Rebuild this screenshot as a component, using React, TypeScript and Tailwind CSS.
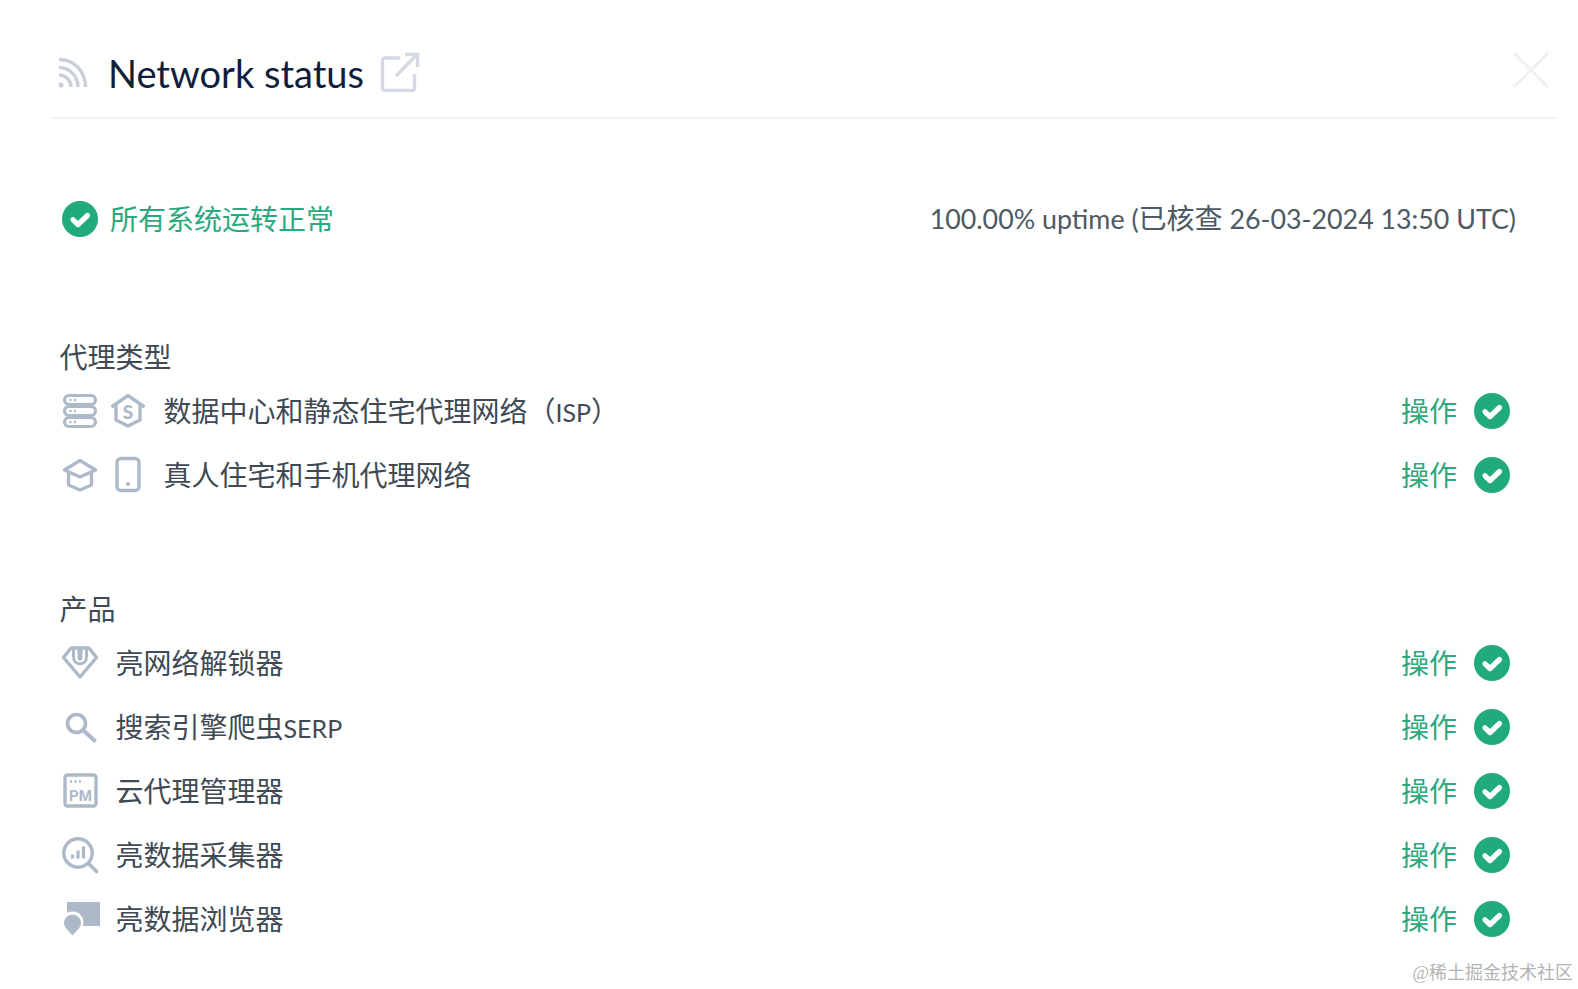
const cjk = "font-['Lato','Noto_Sans_CJK_SC',sans-serif]";

function Check({ className = "" }: { className?: string }) {
  return (
    <svg width="36" height="36" viewBox="0 0 36 36" className={"shrink-0 " + className}>
      <circle cx="18" cy="18" r="18" fill="#21ab7b" />
      <path d="M11 18.8 L16 23.5 L25.5 14.5" fill="none" stroke="#fff" strokeWidth="5.2" strokeLinecap="round" strokeLinejoin="round" />
    </svg>
  );
}

const iconProps = {
  width: 36,
  height: 36,
  viewBox: "0 0 36 36",
  fill: "none",
  stroke: "#adb9c8",
  strokeWidth: 3.4,
  className: "shrink-0 overflow-visible",
};

function ServerIcon() {
  return (
    <svg {...iconProps}>
      {[2.5, 13.5, 24.5].map((y) => (
        <g key={y}>
          <rect x="2.5" y={y} width="31" height="9" rx="4.5" strokeWidth="3.2" />
          <path d={`M7.5 ${y + 4.5} h2 M12 ${y + 4.5} h2`} strokeWidth="2.6" />
        </g>
      ))}
    </svg>
  );
}

function HouseDollarIcon() {
  return (
    <svg {...iconProps}>
      <path d="M1.5 14 L18 2.5 L34.5 14 M6 12 V27 L18 33 L30 27 V12" strokeLinejoin="round" />
      <text x="18" y="25.5" fontSize="19" fontWeight="900" fill="#adb9c8" stroke="none" textAnchor="middle" fontFamily="Lato, sans-serif">
        S
      </text>
    </svg>
  );
}

function HouseIcon() {
  return (
    <svg {...iconProps}>
      <path d="M2.5 13 L18 3.5 L33.5 13 L18 20 Z" strokeLinejoin="round" />
      <path d="M6.5 15.5 V28 L18 33 L29.5 28 V15.5" strokeLinejoin="round" />
    </svg>
  );
}

function PhoneIcon() {
  return (
    <svg {...iconProps}>
      <rect x="7" y="1.5" width="22" height="32" rx="4" />
      <circle cx="18" cy="27" r="2" fill="#adb9c8" stroke="none" />
    </svg>
  );
}

function DiamondIcon() {
  return (
    <svg {...iconProps}>
      <path d="M9 3 H27 L34.5 12.5 L18 32 L1.5 12.5 Z" strokeLinejoin="round" />
      <path d="M11.5 3 V12 C11.5 21 24.5 21 24.5 12 V3 M17 3 V12 C17 15 19 15 19 12 V3" strokeWidth="3" />
    </svg>
  );
}

function SearchIcon() {
  return (
    <svg {...iconProps}>
      <circle cx="14.5" cy="14.5" r="9" strokeWidth="3.6" />
      <path d="M22 22 L32.5 31.5" strokeWidth="4" strokeLinecap="round" />
    </svg>
  );
}

function PmIcon() {
  return (
    <svg {...iconProps}>
      <rect x="3" y="2" width="31" height="31" rx="2.5" />
      <path d="M8 8.5 h2 M12.5 8.5 h2 M17 8.5 h2" strokeWidth="2.4" />
      <text x="18.5" y="28" fontSize="15" fontWeight="700" fill="#adb9c8" stroke="none" textAnchor="middle" fontFamily="Roboto, sans-serif">
        PM
      </text>
    </svg>
  );
}

function AnalyticsIcon() {
  return (
    <svg {...iconProps}>
      <circle cx="16" cy="16" r="14.2" />
      <path d="M26.5 26.5 L34.5 34.5" strokeWidth="3.8" strokeLinecap="round" />
      <path d="M10.5 17.5 V21.5 M16 13.5 V21.5 M21.5 9.5 V21.5" strokeWidth="3.2" />
    </svg>
  );
}

function BrowserIcon() {
  return (
    <svg {...iconProps} stroke="none">
      <rect x="5" y="1" width="33" height="24" fill="#adb9c8" />
      <circle cx="10.5" cy="21.5" r="11" fill="#fff" />
      <path d="M10.5 34.5 L4.5 28 A8.5 8.5 0 1 1 16.5 28 Z" fill="#adb9c8" />
    </svg>
  );
}

type Row = { icons: React.ReactNode[]; label: React.ReactNode; id: string };

const proxyRows: Row[] = [
  {
    id: "isp",
    icons: [<ServerIcon key="a" />, <HouseDollarIcon key="b" />],
    label: (
      <>
        数据中心和静态住宅代理网络（<span className="text-[25px]">ISP</span>）
      </>
    ),
  },
  { id: "residential", icons: [<HouseIcon key="a" />, <PhoneIcon key="b" />], label: "真人住宅和手机代理网络" },
];

const productRows: Row[] = [
  { id: "unlocker", icons: [<DiamondIcon key="a" />], label: "亮网络解锁器" },
  {
    id: "serp",
    icons: [<SearchIcon key="a" />],
    label: (
      <>
        搜索引擎爬虫<span className="text-[25px]">SERP</span>
      </>
    ),
  },
  { id: "pm", icons: [<PmIcon key="a" />], label: "云代理管理器" },
  { id: "collector", icons: [<AnalyticsIcon key="a" />], label: "亮数据采集器" },
  { id: "browser", icons: [<BrowserIcon key="a" />], label: "亮数据浏览器" },
];

function StatusRow({ row }: { row: Row }) {
  return (
    <div className="flex h-[64px] items-center pr-[68px]">
      <div className="flex gap-[12px]">{row.icons}</div>
      <span className="ml-[17.5px] text-[28px] leading-[40px] text-[#3f4a54]">{row.label}</span>
      <span className="ml-auto text-[28px] leading-[40px] text-[#2aa97e]">操作</span>
      <Check className="ml-[17px]" />
    </div>
  );
}

export default function App() {
  return (
    <div className={"relative h-[989px] w-[1578px] overflow-hidden bg-white " + cjk}>
      <header className="ml-[52px] mr-[22px] flex h-[119px] items-center border-b-2 border-[#f3f4f5] pt-[30px]">
        <svg width="32" height="32" viewBox="0 0 32 32" fill="none" stroke="#c9ced8" strokeWidth="3.4" className="ml-[5px] -mt-[2px]">
          <path d="M2 2.5 C17 2.5 28.5 14 28.5 30 M2 10.5 C12.5 10.5 21 19 21 30 M2 18 C8.5 18 14 23.5 14 30" />
          <circle cx="4" cy="28" r="2.5" fill="#c9ced8" stroke="none" />
        </svg>
        <h1 className="ml-[19px] -mt-[2px] text-[38px] font-normal leading-[48px] text-[#0e1e3c]">Network status</h1>
        <svg width="40" height="40" viewBox="0 0 40 40" fill="none" stroke="#d5d9e2" strokeWidth="3.4" className="ml-[16px] -mt-[3px]">
          <path d="M20 6 H5 A2.5 2.5 0 0 0 2.5 8.5 V36 A2.5 2.5 0 0 0 5 38.5 H32 A2.5 2.5 0 0 0 34.5 36 V22" />
          <path d="M16 24 L37 2.5 M25 2.5 H37.5 V15" />
        </svg>
        <svg width="36" height="36" viewBox="0 0 36 36" stroke="#eef0f0" strokeWidth="2.6" className="ml-auto mr-[7px] -mt-[8px]">
          <path d="M1 1 L35 35 M35 1 L1 35" />
        </svg>
      </header>

      <div className="ml-[62px] mr-[62px] mt-[82px] flex h-[36px] items-center">
        <Check />
        <span className="ml-[12px] text-[28px] leading-[40px] text-[#2aa97e]">所有系统运转正常</span>
        <span className="ml-auto -mt-[1px] text-[26.8px] leading-[40px] text-[#4d5963]">
          100.00% uptime (<span className="text-[28px]">已核查</span> 26-03-2024 13:50 UTC)
        </span>
      </div>

      <section className="ml-[59.5px] mt-[100px]">
        <h2 className="mb-[2px] text-[28px] font-normal leading-[40px] text-[#3f4a54]">代理类型</h2>
        <div className="pl-[2.5px]">
          {proxyRows.map((row) => (
            <StatusRow key={row.id} row={row} />
          ))}
        </div>
      </section>

      <section className="ml-[59.5px] mt-[82px]">
        <h2 className="mb-[2px] text-[28px] font-normal leading-[40px] text-[#3f4a54]">产品</h2>
        <div className="pl-[2.5px]">
          {productRows.map((row) => (
            <StatusRow key={row.id} row={row} />
          ))}
        </div>
      </section>

      <div className="absolute bottom-[4px] right-[5px] font-['Liberation_Serif','Noto_Sans_CJK_SC',serif] text-[18px] leading-[24px] text-[#b4b4b4]">
        @稀土掘金技术社区
      </div>
    </div>
  );
}
